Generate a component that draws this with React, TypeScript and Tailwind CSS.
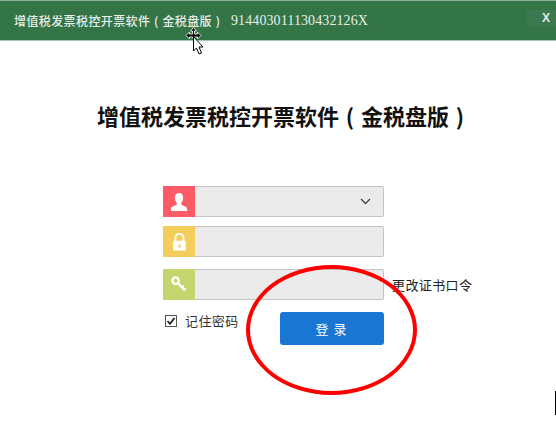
import React from "react";

const cjk = { fontFamily: '"Noto Sans CJK SC", "Liberation Sans", sans-serif' };

function UserIcon() {
  return (
    <svg width="18" height="20" viewBox="0 0 20 20" fill="#fff">
      <path d="M10 0C7 0 5.400 2.200 5.400 5c0 2.500.8 4.500 2.100 5.800v1.800C7 14.200 1.500 14.500 1 17.200V20h18v-2.800c-.5-2.700-6-3-6.500-4.600v-1.800c1.300-1.300 2.100-3.300 2.100-5.800C14.600 2.200 13 0 10 0z" />
    </svg>
  );
}

function LockIcon() {
  return (
    <svg width="15" height="18" viewBox="0 0 16 20">
      <path d="M3.500 9V5.500a4.500 4.500 0 0 1 9 0V9" fill="none" stroke="#fff" strokeWidth="2" />
      <rect x="1" y="8.500" width="14" height="11" rx="1" fill="#fff" />
      <rect x="7" y="12.500" width="2" height="4" fill="#f3ce5d" />
    </svg>
  );
}

function KeyIcon() {
  return (
    <svg width="18" height="17" viewBox="0 0 19 20">
      <circle cx="5.500" cy="5.500" r="3.700" fill="none" stroke="#fff" strokeWidth="2.800" />
      <path d="M8.500 8.500L16.500 17" stroke="#fff" strokeWidth="2.800" fill="none" />
      <path d="M13 13.500l2.500-2M15.500 16l2-1.500" stroke="#fff" strokeWidth="2" fill="none" />
    </svg>
  );
}

function Field({ color, icon, chevron, className }: { color: string; icon: React.ReactNode; chevron?: boolean; className: string }) {
  return (
    <div className={`flex h-[31px] w-[221px] ${className}`}>
      <div className={`flex w-[32px] shrink-0 items-center justify-center ${color}`}>{icon}</div>
      <div className="flex flex-1 items-center justify-end rounded-r-[2px] border border-l-0 border-[#c4c4c4] bg-[#ebebeb] pr-[12px]">
        {chevron && (
          <svg width="11" height="7" viewBox="0 0 11 7" fill="none" stroke="#444" strokeWidth="1.300">
            <path d="M1 1l4.500 4.500L10 1" />
          </svg>
        )}
      </div>
    </div>
  );
}

function Paren({ children }: { children: string }) {
  return <span className="inline-block w-[1em] text-center">{children}</span>;
}

export default function App() {
  return (
    <div className="relative h-[448px] w-[556px] overflow-hidden bg-white" style={cjk}>
      <div className="flex h-[41px] items-center border-t border-b border-t-[#8fb29c] border-b-[#a9c7b3] bg-[#347548] pl-[14px] text-[#e8efe9]">
        <span className="text-[12px] font-medium leading-none tracking-[0.4px] whitespace-nowrap">
          增值税发票税控开票软件<Paren>(</Paren>金税盘版<Paren>)</Paren>
        </span>
        <span className="ml-[7px] text-[14px] leading-none tracking-[0.1px]" style={{ fontFamily: '"Liberation Serif", serif' }}>
          914403011130432126X
        </span>
        <div className="ml-auto mb-[6px] flex h-[16px] w-[29px] items-center justify-end bg-[#3b7a50] pr-[6px] text-[12px] font-bold leading-none text-[#e3ebe5]" style={{ fontFamily: '"Liberation Sans", sans-serif' }}>
          X
        </div>
      </div>

      <h1 className="mt-[58px] pl-[97px] text-[22px] font-bold leading-[32px] text-[#111] whitespace-nowrap">
        增值税发票税控开票软件<Paren>(</Paren>金税盘版<Paren>)</Paren>
      </h1>

      <div className="mt-[55px] ml-[163px] w-[320px]">
        <Field color="bg-[#fd5c66]" icon={<UserIcon />} chevron className="" />
        <Field color="bg-[#f3ce5d]" icon={<LockIcon />} className="mt-[9px]" />
        <div className="mt-[12px] flex">
          <Field color="bg-[#c6d56e]" icon={<KeyIcon />} className="" />
          <span className="ml-[8px] mt-[6px] whitespace-nowrap text-[13px] leading-[20px] tracking-[0.4px] text-[#222]">更改证书口令</span>
        </div>
        <div className="mt-[12px] flex items-start">
          <label className="flex items-center pt-[1px]">
            <svg width="12" height="12" viewBox="0 0 12 12" className="ml-[2px]">
              <rect x="0.500" y="0.500" width="11" height="11" fill="#fff" stroke="#555" />
              <path d="M2.500 6l2.500 2.800L9.500 3" fill="none" stroke="#222" strokeWidth="1.800" />
            </svg>
            <span className="ml-[8px] text-[13px] leading-[16px] tracking-[0.4px] text-[#333]">记住密码</span>
          </label>
          <button className="ml-[41px] flex h-[33px] w-[104px] items-center justify-center rounded-[3px] bg-[#1976d2] pl-[4px] text-[13px] tracking-[5px] text-white">
            登录
          </button>
        </div>
      </div>

      <div className="absolute left-[246px] top-[265px] h-[130px] w-[171px] rounded-[50%] border-[4px] border-[#fe0000]" />

      <svg className="absolute left-[184px] top-[27px]" width="22" height="30" viewBox="0 0 22 30">
        <path d="M9.500 .5l3 3.500h-2v3h3V5l3.500 3.500L13.500 12v-2h-3v1h-2v-1h-3v2L2 8.500 5.500 5v2h3V4h-2z" fill="#111" stroke="#fff" strokeWidth="0.800" />
        <path d="M9.500 9.500V24l3-3 2.500 6 2.500-1-2.500-6h4z" fill="#fff" stroke="#000" strokeWidth="1" />
      </svg>

      <div className="absolute left-[555px] top-[391px] h-[24px] w-[1px] bg-black" />
    </div>
  );
}
